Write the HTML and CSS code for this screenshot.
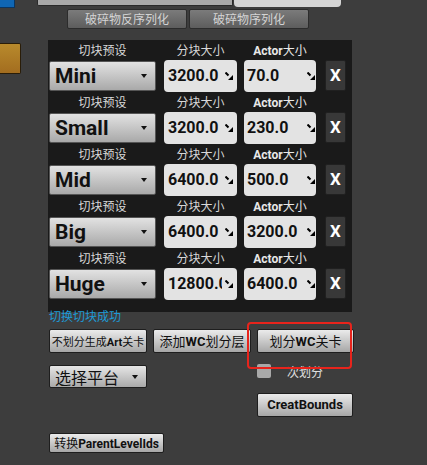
FILE: index.html
```html
<!DOCTYPE html>
<html>
<head>
<meta charset="utf-8">
<link rel="stylesheet" href="styles.css">
</head>
<body>
<div class="top-strip">
  <div class="blue-tab"></div>
  <div class="gray-bar"></div>
  <div class="light-field"></div>
</div>
<div class="serial-row">
  <div class="serial-btn">破碎物反序列化</div>
  <div class="serial-btn">破碎物序列化</div>
</div>
<div class="main">
  <div class="orange-block"></div>
  <div class="panel">
    <div class="preset">
      <div class="labels"><span class="l-preset">切块预设</span><span class="l-size">分块大小</span><span class="l-actor"><b>Actor</b>大小</span></div>
      <div class="controls">
        <div class="combo"><span class="combo-text">Mini</span><span class="arrow"></span></div>
        <div class="num size"><span class="num-text">3200.0</span><svg class="spin" viewBox="0 0 8 8"><path d="M0.5 0.5 L3.5 3.5" stroke="#000" stroke-width="2"/><path d="M8 3 L8 8 L3 8 Z" fill="#000"/></svg></div>
        <div class="num actor"><span class="num-text">70.0</span><svg class="spin" viewBox="0 0 8 8"><path d="M0.5 0.5 L3.5 3.5" stroke="#000" stroke-width="2"/><path d="M8 3 L8 8 L3 8 Z" fill="#000"/></svg></div>
        <div class="xbtn">X</div>
      </div>
    </div>
    <div class="preset">
      <div class="labels"><span class="l-preset">切块预设</span><span class="l-size">分块大小</span><span class="l-actor"><b>Actor</b>大小</span></div>
      <div class="controls">
        <div class="combo"><span class="combo-text">Small</span><span class="arrow"></span></div>
        <div class="num size"><span class="num-text">3200.0</span><svg class="spin" viewBox="0 0 8 8"><path d="M0.5 0.5 L3.5 3.5" stroke="#000" stroke-width="2"/><path d="M8 3 L8 8 L3 8 Z" fill="#000"/></svg></div>
        <div class="num actor"><span class="num-text">230.0</span><svg class="spin" viewBox="0 0 8 8"><path d="M0.5 0.5 L3.5 3.5" stroke="#000" stroke-width="2"/><path d="M8 3 L8 8 L3 8 Z" fill="#000"/></svg></div>
        <div class="xbtn">X</div>
      </div>
    </div>
    <div class="preset">
      <div class="labels"><span class="l-preset">切块预设</span><span class="l-size">分块大小</span><span class="l-actor"><b>Actor</b>大小</span></div>
      <div class="controls">
        <div class="combo"><span class="combo-text">Mid</span><span class="arrow"></span></div>
        <div class="num size"><span class="num-text">6400.0</span><svg class="spin" viewBox="0 0 8 8"><path d="M0.5 0.5 L3.5 3.5" stroke="#000" stroke-width="2"/><path d="M8 3 L8 8 L3 8 Z" fill="#000"/></svg></div>
        <div class="num actor"><span class="num-text">500.0</span><svg class="spin" viewBox="0 0 8 8"><path d="M0.5 0.5 L3.5 3.5" stroke="#000" stroke-width="2"/><path d="M8 3 L8 8 L3 8 Z" fill="#000"/></svg></div>
        <div class="xbtn">X</div>
      </div>
    </div>
    <div class="preset">
      <div class="labels"><span class="l-preset">切块预设</span><span class="l-size">分块大小</span><span class="l-actor"><b>Actor</b>大小</span></div>
      <div class="controls">
        <div class="combo"><span class="combo-text">Big</span><span class="arrow"></span></div>
        <div class="num size"><span class="num-text">6400.0</span><svg class="spin" viewBox="0 0 8 8"><path d="M0.5 0.5 L3.5 3.5" stroke="#000" stroke-width="2"/><path d="M8 3 L8 8 L3 8 Z" fill="#000"/></svg></div>
        <div class="num actor"><span class="num-text">3200.0</span><svg class="spin" viewBox="0 0 8 8"><path d="M0.5 0.5 L3.5 3.5" stroke="#000" stroke-width="2"/><path d="M8 3 L8 8 L3 8 Z" fill="#000"/></svg></div>
        <div class="xbtn">X</div>
      </div>
    </div>
    <div class="preset">
      <div class="labels"><span class="l-preset">切块预设</span><span class="l-size">分块大小</span><span class="l-actor"><b>Actor</b>大小</span></div>
      <div class="controls">
        <div class="combo"><span class="combo-text">Huge</span><span class="arrow"></span></div>
        <div class="num size"><span class="num-text">12800.0</span><svg class="spin" viewBox="0 0 8 8"><path d="M0.5 0.5 L3.5 3.5" stroke="#000" stroke-width="2"/><path d="M8 3 L8 8 L3 8 Z" fill="#000"/></svg></div>
        <div class="num actor"><span class="num-text">6400.0</span><svg class="spin" viewBox="0 0 8 8"><path d="M0.5 0.5 L3.5 3.5" stroke="#000" stroke-width="2"/><path d="M8 3 L8 8 L3 8 Z" fill="#000"/></svg></div>
        <div class="xbtn">X</div>
      </div>
    </div>
  </div>
</div>
<div class="bottom">
  <div class="status">切换切块成功</div>
  <div class="row-a">
    <div class="btn w98 small">不划分生成<b>Art</b>关卡</div>
    <div class="btn w98 big">添加<b>WC</b>划分层</div>
    <div class="btn w97 big">划分<b>WC</b>关卡</div>
  </div>
  <div class="row-b">
    <div class="platform"><span>选择平台</span><span class="arrow"></span></div>
    <div class="check-group"><span class="checkbox"></span><span class="check-label">次划分</span></div>
  </div>
  <div class="row-c">
    <div class="btn w96 bold">CreatBounds</div>
  </div>
  <div class="row-d">
    <div class="btn w115">转换<b>ParentLevelIds</b></div>
  </div>
  <div class="highlight"></div>
</div>
</body>
</html>
```
FILE: styles.css
```css
html, body {
  margin: 0;
  padding: 0;
}
body {
  width: 427px;
  height: 465px;
  overflow: hidden;
  background: #3d3d3d;
  font-family: Roboto, "Noto Sans CJK SC", sans-serif;
  position: relative;
}
.top-strip {
  display: flex;
  height: 8px;
  align-items: flex-start;
}
.blue-tab {
  width: 14px;
  height: 7px;
  background: #0f66b4;
  border-right: 1px solid #0a3561;
  border-bottom: 1px solid #0a3561;
}
.gray-bar {
  margin-left: 22px;
  width: 194px;
  height: 5px;
  background: #a9a9a9;
  border: 1px solid #2a2a2a;
  border-top: none;
  border-radius: 0 0 2px 2px;
}
.light-field {
  margin-left: 1px;
  width: 107px;
  height: 7px;
  background: #d5d5d5;
  border-radius: 0 0 4px 4px;
}
.serial-row {
  display: flex;
  margin-top: 1px;
  margin-left: 67px;
  gap: 2px;
}
.serial-btn {
  width: 118px;
  height: 18px;
  border: 1px solid #2c2c2c;
  border-radius: 2px;
  background: linear-gradient(#7b7b7b, #5d5d5d);
  color: #d4d4d4;
  font-size: 12px;
  line-height: 18px;
  text-align: center;
  font-family: "Noto Sans CJK SC", sans-serif;
}
.main {
  display: flex;
  margin-top: 11px;
  align-items: flex-start;
}
.orange-block {
  margin-top: 3px;
  width: 20px;
  height: 29px;
  background: linear-gradient(#b88a2c, #a36d1f);
  border: 1px solid #2a1d08;
  border-left: none;
  border-radius: 0 2px 2px 0;
}
.panel {
  margin-left: 27px;
  width: 303px;
  padding: 0 0 12px 1px;
  background: #1a1a1a;
}
.preset {
  height: 52px;
}
.labels {
  display: flex;
  height: 19px;
  align-items: center;
  color: #d8d8d8;
  font-size: 12px;
  font-family: "Noto Sans CJK SC", sans-serif;
}
.labels b {
  font-family: Roboto, sans-serif;
  font-weight: 700;
  color: #e8e8e8;
}
.l-preset { width: 107px; text-align: center; }
.l-size { width: 73px; margin-left: 8px; text-align: center; }
.l-actor { width: 72px; margin-left: 7px; text-align: center; color: #e8e8e8; }
.controls {
  display: flex;
  height: 33px;
  align-items: center;
}
.combo {
  width: 105px;
  height: 28px;
  border: 1px solid #555;
  border-radius: 2px;
  background: linear-gradient(#e2e2e2, #a9a9a9);
  display: flex;
  align-items: center;
  justify-content: space-between;
}
.combo-text {
  padding-left: 5px;
  font-size: 21px;
  font-weight: 700;
  color: #111;
}
.arrow {
  width: 0;
  height: 0;
  border-left: 3.5px solid transparent;
  border-right: 3.5px solid transparent;
  border-top: 4px solid #111;
  margin-right: 8px;
}
.num {
  height: 32px;
  background: #e3e3e3;
  border-radius: 4px;
  display: flex;
  align-items: center;
  box-sizing: border-box;
}
.num.size {
  width: 73px;
  margin-left: 8px;
  padding-left: 4px;
}
.num.actor {
  width: 72px;
  margin-left: 7px;
  padding-left: 3px;
}
.num-text {
  font-size: 16px;
  font-weight: 700;
  color: #111;
  white-space: nowrap;
  overflow: hidden;
}
.num.size .num-text { width: 54px; }
.num.actor .num-text { width: 57px; }
.spin {
  width: 8px;
  height: 8px;
  margin-left: 3px;
  flex: none;
}
.xbtn {
  margin-left: 9px;
  width: 19px;
  height: 29px;
  background: #383838;
  border: 1px solid #202020;
  border-radius: 2px;
  color: #fff;
  font-weight: 700;
  font-size: 17px;
  line-height: 29px;
  text-align: center;
}
.bottom {
  padding-left: 49px;
}
.status {
  margin-top: -4px;
  height: 16px;
  line-height: 16px;
  font-size: 12px;
  color: #1d9ad6;
  font-family: "Noto Sans CJK SC", sans-serif;
}
.row-a {
  display: flex;
  gap: 6px;
  margin-top: 5px;
}
.btn {
  box-sizing: border-box;
  height: 24px;
  border: 1px solid #1e1e1e;
  border-radius: 2px;
  background: linear-gradient(#ebebeb, #a7a7a7);
  color: #111;
  font-size: 12px;
  line-height: 22px;
  text-align: center;
  white-space: nowrap;
  font-family: "Noto Sans CJK SC", sans-serif;
}
.btn b {
  font-family: Roboto, sans-serif;
  font-weight: 700;
}
.btn.small { font-size: 11px; }
.btn.big { font-size: 13px; }
.w98 { width: 98px; }
.w97 { width: 97px; }
.w96 { width: 96px; }
.w115 { width: 115px; height: 20px; line-height: 18px; }
.btn.bold {
  font-family: Roboto, sans-serif;
  font-weight: 700;
  font-size: 13px;
}
.row-b {
  display: flex;
  margin-top: 11px;
  height: 24px;
  align-items: flex-start;
}
.platform {
  margin-top: 1px;
  box-sizing: border-box;
  width: 98px;
  height: 23px;
  border: 1px solid #1e1e1e;
  border-radius: 2px;
  background: linear-gradient(#e6e6e6, #a9a9a9);
  display: flex;
  align-items: center;
  justify-content: space-between;
  padding-left: 5px;
  font-size: 16px;
  color: #111;
  font-family: "Noto Sans CJK SC", sans-serif;
}
.platform .arrow {
  margin-right: 8px;
}
.check-group {
  margin-left: 110px;
  display: flex;
  align-items: center;
  height: 14px;
}
.checkbox {
  width: 14px;
  height: 14px;
  border-radius: 2px;
  background: #a9a9a9;
}
.check-label {
  margin-left: 16px;
  font-size: 12px;
  color: #e0e0e0;
  font-family: "Noto Sans CJK SC", sans-serif;
}
.row-c {
  margin-top: 5px;
  padding-left: 208px;
}
.row-d {
  margin-top: 16px;
}
.highlight {
  position: absolute;
  left: 247px;
  top: 322px;
  width: 101px;
  height: 43px;
  border: 2px solid #e8241c;
  border-radius: 4px;
}
```
